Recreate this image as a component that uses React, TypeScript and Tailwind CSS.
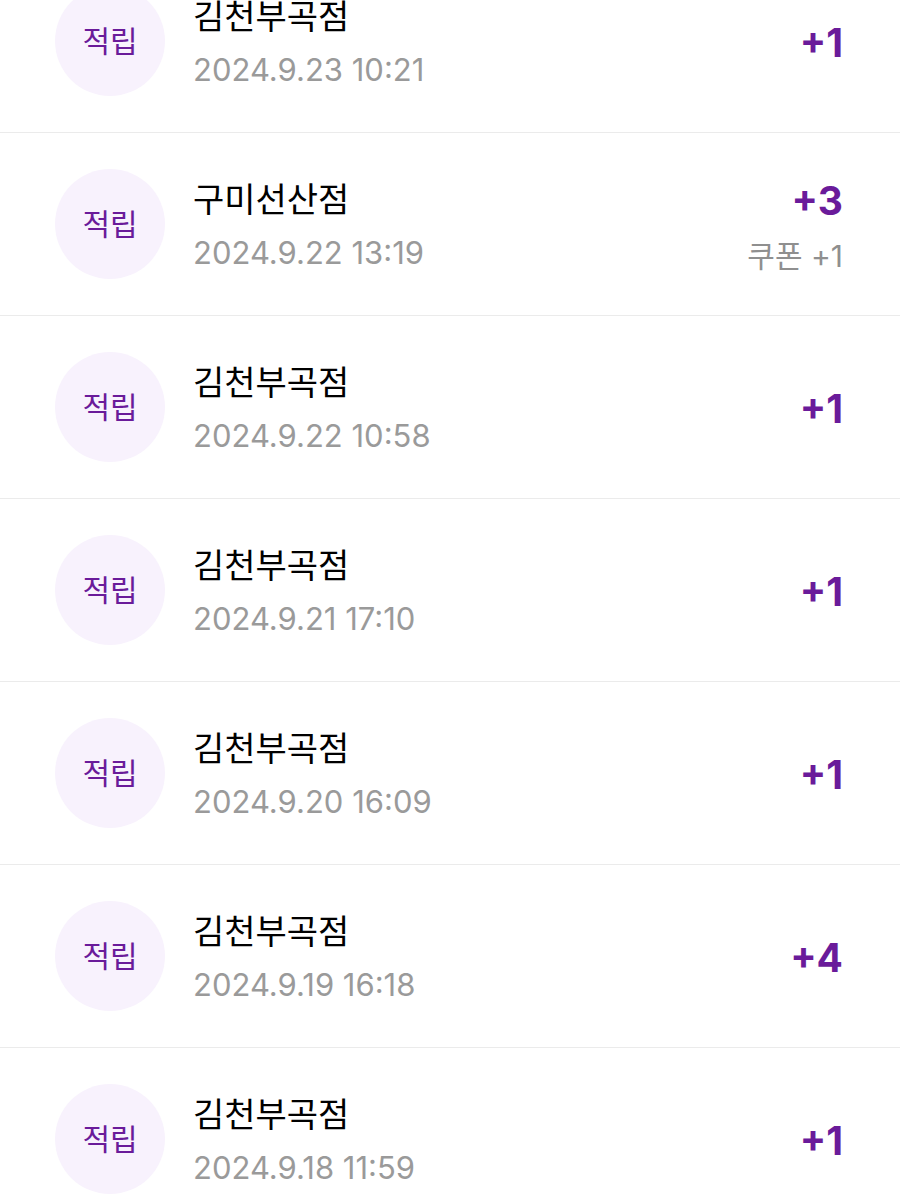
const rows = [
  { store: '김천부곡점', date: '2024.9.23 10:21', points: '+1' },
  { store: '구미선산점', date: '2024.9.22 13:19', points: '+3', coupon: '쿠폰 +1' },
  { store: '김천부곡점', date: '2024.9.22 10:58', points: '+1' },
  { store: '김천부곡점', date: '2024.9.21 17:10', points: '+1' },
  { store: '김천부곡점', date: '2024.9.20 16:09', points: '+1' },
  { store: '김천부곡점', date: '2024.9.19 16:18', points: '+4' },
  { store: '김천부곡점', date: '2024.9.18 11:59', points: '+1' },
];

type Row = { store: string; date: string; points: string; coupon?: string };

function HistoryRow({ row }: { row: Row }) {
  return (
    <div className="flex items-center h-[183px] border-b border-[#ebebeb] pl-[55px] pr-[57px]">
      {/* badge */}
      <div className="w-[110px] h-[110px] rounded-full bg-[#f8f2fd] flex items-center justify-center shrink-0">
        <span className="text-[30px] text-[#6a1b9a] leading-none">적립</span>
      </div>

      <div className="ml-[28px] pt-[4px] flex flex-col flex-1">
        <span className="text-[34px] leading-[38px] text-black">{row.store}</span>
        <span className="text-[31px] leading-[38px] text-[#9a9a9a] mt-[15px]">{row.date}</span>
      </div>

      <div className="flex flex-col items-end pt-[4px]">
        <span className="text-[39px] leading-[42px] font-bold text-[#6a1b9a]">{row.points}</span>
        {row.coupon && (
          <span className="text-[30px] leading-[34px] text-[#8f8f8f] mt-[17px]">{row.coupon}</span>
        )}
      </div>
    </div>
  );
}

export default function App() {
  return (
    <div
      className="w-[900px] h-[1200px] overflow-hidden bg-white"
      style={{ fontFamily: 'Inter, "Noto Sans CJK KR", sans-serif' }}
    >
      {/* list is scrolled; first row partially hidden */}
      <div className="-mt-[50px]">
        {rows.map((r, i) => (
          <HistoryRow key={i} row={r} />
        ))}
      </div>
    </div>
  );
}
